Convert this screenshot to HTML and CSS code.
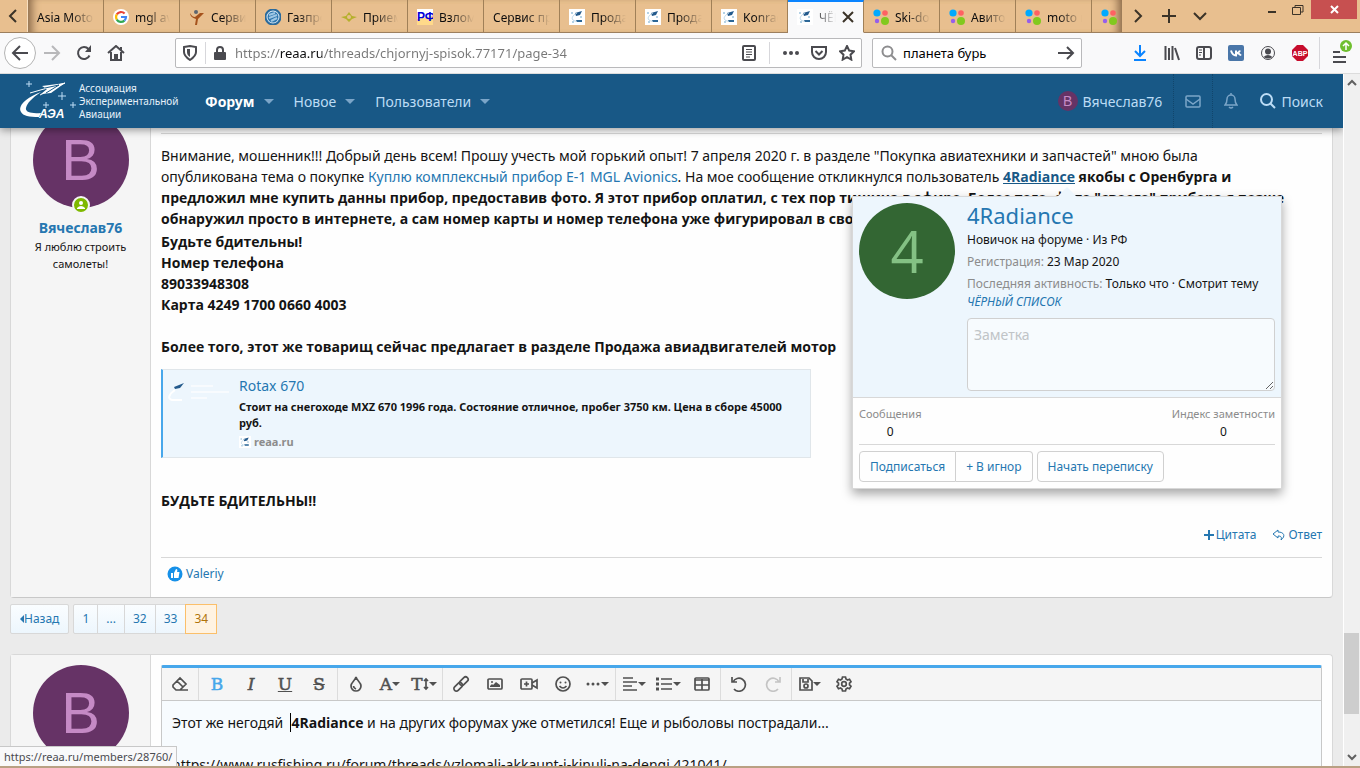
FILE: index.html
```html
<!DOCTYPE html>
<html lang="ru">

<head>
    <meta charset="UTF-8">
    <meta name="viewport" content="width=device-width, initial-scale=1.0">
    <title>ЧЁРНЫЙ СПИСОК</title>
    <link rel="stylesheet" href="styles.css">
</head>

<body>
    <!-- общие значки -->
    <svg class="defs" width="0" height="0">
        <symbol id="fav-reaa" viewBox="0 0 16 16">
            <rect width="16" height="16" fill="#fff" />
            <path d="M6 4l7-2-2 4-4 1z" fill="#235a8c" />
            <path d="M8 4C4 6 2 9 4 11s6 1 9 1" fill="none" stroke="#b9d5e8" />
            <path d="M7 11h6v2H8z" fill="#2c6797" />
            <path d="M3 3v2M2 4h2M12 7v2M11 8h2M4 12v2M3 13h2" stroke="#9cc3dd" />
        </symbol>
        <symbol id="fav-avito" viewBox="0 0 16 16">
            <circle cx="4" cy="4" r="3.6" fill="#0af" />
            <circle cx="12" cy="4" r="2.8" fill="#ff6163" />
            <circle cx="4" cy="12" r="2.2" fill="#965eeb" />
            <circle cx="12" cy="12" r="4" fill="#82c91e" />
        </symbol>
        <symbol id="caret" viewBox="0 0 8 4">
            <path d="M0 0h8L4 4z" fill="currentColor" />
        </symbol>
    </svg>

    <div class="tabbar">
        <button class="tab-scroll" aria-label="Назад"><svg width="16" height="16"><path d="M10 2L4 8l6 6" /></svg></button>
        <div class="tabs">
            <div class="tab"><span>Asia Motors</span></div>
            <div class="tab">
                <svg class="fav" viewBox="0 0 16 16">
                    <circle cx="8" cy="8" r="8" fill="#fff" />
                    <g fill="none" stroke-width="2.2">
                        <path d="M3.8 5.4A5 5 0 0 1 11.6 4.5" stroke="#ea4335" />
                        <path d="M3.8 5.4a5 5 0 0 0 0 5.2" stroke="#fbbc05" />
                        <path d="M3.8 10.6a5 5 0 0 0 7.6 1" stroke="#34a853" />
                        <path d="M8 8h5a5 5 0 0 1-1.6 3.6" stroke="#4285f4" />
                    </g>
                </svg>
                <span>mgl avionics</span>
            </div>
            <div class="tab">
                <svg class="fav" viewBox="0 0 16 16">
                    <circle cx="7" cy="3" r="2" fill="#5d6670" />
                    <path d="M1 4c2 3 3 4 5 4l5-4 4 0-6 6-1 6H6l1-6C3 9 1 7 1 4z" fill="#a5521c" />
                </svg>
                <span>Сервис</span>
            </div>
            <div class="tab">
                <svg class="fav" viewBox="0 0 16 16">
                    <circle cx="8" cy="8" r="7.5" fill="#d9e8f3" stroke="#2a6a9c" />
                    <circle cx="8" cy="8" r="5.5" fill="#2d76ae" />
                    <path d="M4 6l6-2M4 9l8-3M6 12l6-3" stroke="#9fc7e4" />
                </svg>
                <span>Газпром</span>
            </div>
            <div class="tab">
                <svg class="fav" viewBox="0 0 16 16">
                    <path d="M0 8l5-1 3-4 3 4 5 1-5 2-3 3-3-3z" fill="#b5b02c" />
                    <circle cx="8" cy="8" r="2" fill="#e8bf8f" />
                </svg>
                <span>Приемка</span>
            </div>
            <div class="tab">
                <svg class="fav" viewBox="0 0 16 16">
                    <rect width="16" height="16" fill="#fff" />
                    <path d="M0 16V10l16-3v9z" fill="#ffd98a" />
                    <text x="0" y="12" class="fav-text">РФ</text>
                </svg>
                <span>Взломали</span>
            </div>
            <div class="tab"><span>Сервис про</span></div>
            <div class="tab"><svg class="fav"><use href="#fav-reaa" /></svg><span>Продажа</span></div>
            <div class="tab"><svg class="fav"><use href="#fav-reaa" /></svg><span>Продажа</span></div>
            <div class="tab"><svg class="fav"><use href="#fav-reaa" /></svg><span>Konrad</span></div>
            <div class="tab tab-active">
                <svg class="fav"><use href="#fav-reaa" /></svg><span>ЧЁРНЫЙ</span>
                <button class="tab-close" aria-label="Закрыть вкладку"><svg width="12" height="12"><path d="M1 1l10 10M11 1L1 11" /></svg></button>
            </div>
            <div class="tab"><svg class="fav"><use href="#fav-avito" /></svg><span>Ski-doo</span></div>
            <div class="tab"><svg class="fav"><use href="#fav-avito" /></svg><span>Авито —</span></div>
            <div class="tab"><svg class="fav"><use href="#fav-avito" /></svg><span>moto m</span></div>
            <div class="tab"><svg class="fav"><use href="#fav-avito" /></svg><span>moto</span></div>
        </div>
        <div class="tab-tools">
            <button aria-label="Вперёд"><svg width="16" height="16"><path d="M5 2l6 6-6 6" /></svg></button>
            <button aria-label="Новая вкладка"><svg width="16" height="16"><path d="M8 1v14M1 8h14" /></svg></button>
            <button aria-label="Список вкладок"><svg width="16" height="16"><path d="M2 5l6 6 6-6" /></svg></button>
        </div>
        <div class="window-buttons">
            <button aria-label="Свернуть"><svg width="10" height="10"><path d="M1 7h8" stroke-width="2" /></svg></button>
            <button aria-label="Развернуть"><svg width="12" height="10"><path d="M3 2V.5h8V7H9M.5 2.5h8v7h-8z" /></svg></button>
            <button class="window-close" aria-label="Закрыть"><svg width="9" height="9"><path d="M1 1l7 7M8 1L1 8" stroke-width="2" /></svg></button>
        </div>
    </div>

    <div class="toolbar">
        <button class="back" aria-label="Назад"><svg width="18" height="16"><path d="M9 1L2 8l7 7M2 8h15" /></svg></button>
        <button class="disabled" aria-label="Вперёд"><svg width="18" height="16"><path d="M9 1l7 7-7 7M16 8H1" /></svg></button>
        <button aria-label="Обновить"><svg width="16" height="16"><path d="M13.5 10.5A6 6 0 1 1 12.500 4" /><path d="M15 0v7H9z" class="solid" /></svg></button>
        <button aria-label="Домой"><svg width="18" height="16"><path d="M1 8l8-7 8 7M4 7v8h10V7M14 5V2" /><path d="M7 9h4v6H7z" class="solid" /></svg></button>
        <div class="urlbar">
            <svg width="14" height="16"><path d="M1 2l6-1 6 1v5c0 4-3 6-6 8-3-2-6-4-6-8z" /><path d="M7 4v8C5 11 4 9 4 7V4z" class="solid" /></svg>
            <i class="url-sep"></i>
            <svg width="12" height="16"><path d="M3 7V5a3 3 0 0 1 6 0v2" /><rect y="7" width="12" height="8" rx="1" class="solid" /></svg>
            <input class="url" type="text" aria-label="Адрес" value="https://reaa.ru/threads/chjornyj-spisok.77171/page-34">
            <svg width="14" height="16"><rect x="1" y="1" width="12" height="14" rx="1" /><path d="M4 4.500h6M4 7h6M4 9.500h6M4 12h4" stroke-width="1" /></svg>
            <i class="url-sep url-sep-right"></i>
            <svg width="17" height="16"><g class="solid"><circle cx="3" cy="8" r="2" /><circle cx="9" cy="8" r="2" /><circle cx="15" cy="8" r="2" /></g></svg>
            <svg width="16" height="16"><path d="M1 2h14v5a7 7 0 0 1-14 0z" /><path d="M4.500 6L8 9.500 11.500 6" /></svg>
            <svg width="16" height="16"><path d="M8 1l2.200 4.600 4.800.7-3.500 3.400.8 4.900L8 12.200l-4.300 2.400.8-4.900L1 6.300l4.800-.7z" /></svg>
        </div>
        <div class="searchbar">
            <svg class="grey" width="16" height="16"><circle cx="6.500" cy="6.500" r="5" /><path d="M10 10l5 5" /></svg>
            <input type="text" aria-label="Поиск" value="планета бурь">
            <svg width="17" height="14"><path d="M9 1l6 6-6 6M0 7h15" /></svg>
        </div>
        <div class="extensions">
            <button class="download" aria-label="Загрузки"><svg width="14" height="16"><path d="M7 0v11M2 6l5 5 5-5M1 15h12" /></svg></button>
            <button aria-label="Библиотека"><svg width="16" height="16"><path d="M1.500 1v14M5 3v12M8.500 1v14M11 3l4 12" /></svg></button>
            <button aria-label="Боковая панель"><svg width="16" height="16"><rect x="1" y="2" width="14" height="12" rx="2" /><path d="M8 2v12" /><path d="M3 5h3M3 7.500h3M3 10h2" stroke-width="1" /></svg></button>
            <button aria-label="ВК"><svg width="16" height="16"><rect width="16" height="16" rx="2" fill="#4a76a8" stroke="none" /><path d="M3 5.500q1.500 5 5 5v-5M8 8q3 0 4-2.500M8 8q3 0 5 2.500" stroke="#fff" /></svg></button>
            <button aria-label="Профиль"><svg width="16" height="16"><circle cx="8" cy="8" r="6.500" stroke-width="1" /><circle cx="8" cy="6.500" r="3" class="solid" /><path d="M3.500 12q4.500-4 9 0-4.500 3-9 0z" class="solid" /></svg></button>
            <button aria-label="Adblock Plus"><svg width="16" height="16"><path d="M5 0h6l5 5v6l-5 5H5l-5-5V5z" fill="#c70d2c" stroke="none" /><text x="8" y="11" class="abp">ABP</text></svg></button>
        </div>
        <button class="menu" aria-label="Меню">
            <svg width="24" height="28"><path d="M3 13h7M3 18h13M3 23h13" /><circle cx="16" cy="7" r="6" fill="#6fbf2f" stroke="none" /><path d="M16 11V4M13 7l3-3 3 3" stroke="#fff" stroke-width="1.500" /></svg>
        </button>
    </div>

    <div class="viewport">
        <div class="page">
            <header class="site-nav">
                <a class="logo" href="#" aria-label="Ассоциация Экспериментальной Авиации">
                    <svg width="56" height="40" viewBox="0 0 56 40">
                        <path d="M22 5l23-3-14 10-10 1 6-5z" fill="#fff" />
                        <path d="M10 12L45 2 20 14" fill="none" stroke="#fff" stroke-width="1" />
                        <path d="M25 7l14-3-13 8" fill="none" stroke="#185886" stroke-width="1" />
                        <path d="M21 11C7 16-3 25 1 31c2 4 8 5 18 5l2-4C11 33 5 31 6 27c1-5 6-10 15-16z" fill="#fff" />
                        <path d="M9 0v6M6 3h6M42 11v8M38 15h8M26 21v6M23 24h6M53 21v6M50 24h6" stroke="#bcdcf5" stroke-width="1" />
                        <text x="19" y="37" class="logo-mark">АЭА</text>
                    </svg>
                    <span>Ассоциация<br>Экспериментальной<br>Авиации</span>
                </a>
                <nav>
                    <a class="nav-active" href="#">Форум</a><svg class="nav-caret"><use href="#caret" /></svg>
                    <a href="#">Новое</a><svg class="nav-caret"><use href="#caret" /></svg>
                    <a href="#">Пользователи</a><svg class="nav-caret"><use href="#caret" /></svg>
                </nav>
                <div class="account">
                    <a href="#"><b class="avatar avatar-xs">В</b>Вячеслав76</a>
                    <a class="dotted" href="#" aria-label="Переписка"><svg class="dim" width="16" height="16"><rect x="1" y="3" width="14" height="11" rx="1" /><path d="M1 6l7 5 7-5" /></svg></a>
                    <a href="#" aria-label="Оповещения"><svg class="dim" width="14" height="16"><path d="M1 12h12c-2-2-2-3-2-6a4 4 0 0 0-8 0c0 3 0 4-2 6zM5 14q2 2 4 0M7 0v2" /></svg></a>
                    <a href="#"><svg width="16" height="16"><circle cx="6.500" cy="6.500" r="5.500" /><path d="M10.500 10.500L15 15" /></svg>Поиск</a>
                </div>
            </header>

            <main>
                <article class="card">
                    <aside class="user">
                        <a class="avatar" href="#">В
                            <svg class="online" width="18" height="18"><circle cx="9" cy="9" r="8" fill="#7fb900" stroke="#f5f5f5" stroke-width="2" /><circle cx="9" cy="7" r="2" fill="#fff" /><path d="M5 12q4-4 8 0v1H5z" fill="#fff" /></svg>
                        </a>
                        <a class="user-name" href="#">Вячеслав76</a>
                        <p>Я люблю строить самолеты!</p>
                    </aside>
                    <div class="post">
                        <div class="post-head">Среда в 21:40</div>
                        <p class="intro">Внимание, мошенник!!! Добрый день всем! Прошу учесть мой горький опыт! 7 апреля 2020 г. в разделе "Покупка авиатехники и запчастей" мною была<br>
                            опубликована тема о покупке <a href="#">Куплю комплексный прибор E-1 MGL Avionics</a>. На мое сообщение откликнулся пользователь <b><a class="mention" href="#">4Radiance</a> якобы с Оренбурга и<br>
                            предложил мне купить данны прибор, предоставив фото. Я этот прибор оплатил, с тех пор тишина в эфире. Более того, фото "своего" прибора я позже<br>
                            обнаружил просто в интернете, а сам номер карты и номер телефона уже фигурировал в сводках мошенников на других форумах по интернету.</b></p>
                        <p class="details">Будьте бдительны!<br>Номер телефона<br>89033948308<br>Карта 4249 1700 0660 4003<br><br>Более того, этот же товарищ сейчас предлагает в разделе Продажа авиадвигателей мотор</p>
                        <div class="unfurl">
                            <svg width="64" height="24" viewBox="0 0 64 24">
                                <path d="M7 6l10-4-4 5-5 1z" fill="#235a8c" />
                                <path d="M8 9C2 13 0 18 5 19h10" fill="none" stroke="#fff" stroke-width="2" />
                                <path d="M24 5h22M24 11h38M24 17h16" stroke="#fff" stroke-opacity=".6" />
                            </svg>
                            <div>
                                <a class="unfurl-title" href="#">Rotax 670</a>
                                <p>Стоит на снегоходе MXZ 670 1996 года. Состояние отличное, пробег 3750 км. Цена в сборе 45000 руб.</p>
                                <small><svg width="12" height="12"><use href="#fav-reaa" /></svg>reaa.ru</small>
                            </div>
                        </div>
                        <p class="warning">БУДЬТЕ БДИТЕЛЬНЫ!!</p>
                        <div class="actions">
                            <a href="#"><svg width="10" height="10"><path d="M5 0v10M0 5h10" stroke-width="2" /></svg>Цитата</a>
                            <a href="#"><svg width="14" height="12"><path d="M6 1L1 5l5 4V7c3 0 4 1 3 4 5-4 3-8-3-8z" /></svg>Ответ</a>
                        </div>
                        <div class="reactions">
                            <svg width="16" height="16"><circle cx="8" cy="8" r="7.500" fill="#1690e8" /><path d="M4 7h2v5H4zM7 7l2-4q2 0 1 3h2.500L11.500 12H7z" fill="#fff" /></svg>
                            <a href="#">Valeriy</a>
                        </div>
                    </div>
                </article>

                <nav class="pager">
                    <a class="pager-prev" href="#"><svg width="4" height="8"><path d="M4 0v8L0 4z" /></svg>Назад</a>
                    <div class="pages">
                        <a href="#">1</a><a href="#">...</a><a href="#">32</a><a href="#">33</a><a class="current" href="#">34</a>
                    </div>
                </nav>

                <section class="card">
                    <aside class="user"><a class="avatar" href="#">В</a></aside>
                    <div class="post">
                        <div class="editor">
                            <div class="editor-tools">
                                <div class="group">
                                    <button aria-label="Очистить"><svg width="18" height="16"><path d="M2 9l7-7 6 6-6 6H5L2 11zM6 5l6 6M8 14h9" /></svg></button>
                                </div>
                                <div class="group">
                                    <button class="glyph on">B</button>
                                    <button class="glyph"><i>I</i></button>
                                    <button class="glyph"><u>U</u></button>
                                    <button class="glyph"><s>S</s></button>
                                </div>
                                <div class="group">
                                    <button aria-label="Цвет"><svg width="12" height="16"><path d="M6 1c1 4 5 5 5 9a5 5 0 0 1-10 0c0-4 4-5 5-9zM3.500 10q0 2 2.500 3" /></svg></button>
                                    <button class="glyph">A<svg class="caret"><use href="#caret" /></svg></button>
                                    <button class="glyph">T<svg width="6" height="14"><path d="M3 2v10M1 4l2-2 2 2M1 10l2 2 2-2" /></svg><svg class="caret"><use href="#caret" /></svg></button>
                                </div>
                                <div class="group">
                                    <button aria-label="Ссылка"><svg width="18" height="18"><rect x="0" y="6.500" width="10" height="5" rx="2.500" transform="rotate(-45 9 9)" /><rect x="8" y="6.500" width="10" height="5" rx="2.500" transform="rotate(-45 9 9)" /></svg></button>
                                    <button aria-label="Картинка"><svg width="16" height="14"><rect x="1" y="2" width="14" height="10" rx="1" /><path d="M3 10V9l2-2 1 1 3-3 4 3v2z" class="solid" /><circle cx="5" cy="5" r="1" class="solid" /></svg></button>
                                    <button aria-label="Медиа"><svg width="18" height="14"><rect x="1" y="2" width="11" height="10" rx="1" /><path d="M12 6l5-3v8l-5-3M6.500 4.500v5M4 7h5" /></svg></button>
                                    <button aria-label="Смайлы"><svg width="16" height="16"><circle cx="8" cy="8" r="7" /><circle cx="5.500" cy="6.500" r="1" class="solid" /><circle cx="10.500" cy="6.500" r="1" class="solid" /><path d="M4.500 10q3.500 4 7 0" /></svg></button>
                                    <button aria-label="Вставить"><svg width="15" height="4"><g class="solid"><circle cx="2" cy="2" r="1.500" /><circle cx="7" cy="2" r="1.500" /><circle cx="12" cy="2" r="1.500" /></g></svg><svg class="caret"><use href="#caret" /></svg></button>
                                </div>
                                <div class="group">
                                    <button aria-label="Выравнивание"><svg width="15" height="16"><path d="M0 2h10M0 6h14M0 10h9M0 14h14" /></svg><svg class="caret"><use href="#caret" /></svg></button>
                                    <button aria-label="Список"><svg width="17" height="16"><path d="M0 3h3M0 8h3M0 13h3" stroke-width="3" /><path d="M5 3h11M5 8h11M5 13h11" /></svg><svg class="caret"><use href="#caret" /></svg></button>
                                    <button aria-label="Таблица"><svg width="16" height="14"><rect x="1" y="1" width="14" height="12" rx="1" /><path d="M1 3h14M1 8h14M8 2v11" /></svg></button>
                                </div>
                                <div class="group">
                                    <button aria-label="Отменить"><svg width="16" height="16"><path d="M1 1v5h5M2 6a6.500 6.500 0 1 1 1 7" /></svg></button>
                                    <button class="off" aria-label="Повторить"><svg width="16" height="16"><path d="M15 1v5h-5M14 6a6.500 6.500 0 1 0-1 7" /></svg></button>
                                </div>
                                <div class="group">
                                    <button aria-label="Черновики"><svg width="14" height="14"><path d="M1 1h9l3 3v9H1zM4 2v3h5V2" /><circle cx="7" cy="9" r="2" /></svg><svg class="caret"><use href="#caret" /></svg></button>
                                    <button aria-label="Настройки"><svg width="16" height="16"><path d="M6.500 1h3l.5 2 1.500 1 2-.8 1.500 2.600L13.500 7.200v1.600l1.500 1.400-1.500 2.600-2-.8-1.500 1-.5 2h-3l-.5-2-1.500-1-2 .8L1 10.200l1.500-1.400V7.200L1 5.800l1.500-2.600 2 .8L6 3z" /><circle cx="8" cy="8" r="2.300" /></svg></button>
                                </div>
                            </div>
                            <div class="editor-body" contenteditable="true" role="textbox" aria-label="Ответ">
                                <p>Этот же негодяй&nbsp; <b class="cursor">4Radiance</b> и на других форумах уже отметился! Еще и рыболовы пострадали...</p>
                                <p>https://www.rusfishing.ru/forum/threads/vzlomali-akkaunt-i-kinuli-na-dengi.421041/</p>
                            </div>
                        </div>
                    </div>
                </section>
            </main>

            <!-- карточка пользователя -->
            <div class="member-tip">
                <div class="tip-head">
                    <a class="avatar avatar-green" href="#">4</a>
                    <div class="tip-info">
                        <a class="tip-name" href="#">4Radiance</a>
                        <p>Новичок на форуме · Из РФ</p>
                        <p><span>Регистрация:</span> 23 Мар 2020</p>
                        <p class="tip-activity"><span>Последняя активность:</span> Только что · Смотрит тему <a href="#">ЧЁРНЫЙ СПИСОК</a></p>
                        <textarea placeholder="Заметка" aria-label="Заметка"></textarea>
                    </div>
                </div>
                <div class="tip-body">
                    <div class="tip-stats">
                        <dl><dt>Сообщения</dt><dd>0</dd></dl>
                        <dl><dt>Индекс заметности</dt><dd>0</dd></dl>
                    </div>
                    <div class="tip-buttons">
                        <div class="button-pair"><button>Подписаться</button><button>+ В игнор</button></div>
                        <button>Начать переписку</button>
                    </div>
                </div>
            </div>

            <div class="status">https://reaa.ru/members/28760/</div>
        </div>
        <div class="scrollbar">
            <svg width="10" height="18"><path d="M1 11l4-4 4 4" /></svg>
            <div class="track"><div class="thumb"></div></div>
            <svg width="10" height="18"><path d="M1 7l4 4 4-4" /></svg>
        </div>
    </div>
</body>

</html>
```
FILE: styles.css
```css
* {
    margin: 0;
    padding: 0;
    box-sizing: border-box;
}

body {
    display: flex;
    flex-direction: column;
    height: 100vh;
    overflow: hidden;
    border-bottom: 2px solid #b9a083;
    font-family: "Noto Sans", "Open Sans", sans-serif;
    font-size: 14px;
    line-height: 21px;
    color: #141414;
    background: #ebebeb;
}

a {
    color: #2577b1;
    text-decoration: none;
}

button {
    font: inherit;
    color: inherit;
    border: none;
    background: none;
}

input,
textarea {
    font: inherit;
    border: none;
    outline: none;
    background: none;
}

svg {
    flex: none;
    fill: none;
    stroke: currentColor;
    stroke-width: 2;
}

svg .solid {
    fill: currentColor;
    stroke: none;
}

svg text,
svg use,
symbol {
    stroke-width: 1;
}

.defs {
    position: absolute;
}

/* вкладки */
.tabbar {
    display: flex;
    flex: none;
    height: 33px;
    background: #e8bf8f;
    border-bottom: 1px solid #9c7f5e;
    font-size: 12px;
    color: #0c0c0d;
}

.tabbar button {
    display: flex;
    align-items: center;
    justify-content: center;
    color: #3b3328;
}

.tab-scroll {
    width: 28px;
    border-right: 1px solid #f8dfc0 !important;
}

.tabs {
    display: flex;
    flex: 1;
    overflow: hidden;
    margin-bottom: -1px;
    box-shadow: inset 10px 0 8px -6px #8a6a4a, inset -10px 0 8px -6px #8a6a4a;
}

.tab {
    display: flex;
    flex: none;
    align-items: center;
    gap: 6px;
    width: 76px;
    padding: 2px 9px 0;
    border-right: 1px solid #a08058;
    border-bottom: 1px solid #9c7f5e;
}

.tab span {
    flex: 1;
    overflow: hidden;
    white-space: nowrap;
    -webkit-mask-image: linear-gradient(to left, transparent, #000 24px);
    mask-image: linear-gradient(to left, transparent, #000 24px);
}

.tab-active {
    padding-top: 0;
    background: #f9f9fa;
    border-top: 2px solid #0a84ff;
    border-bottom-color: #f9f9fa;
}

.fav {
    width: 16px;
    height: 16px;
    stroke: none;
}

.fav-text {
    font: bold 12px "Liberation Sans", sans-serif;
    fill: #0000d8;
}

.tab-tools {
    display: flex;
    flex: none;
    width: 137px;
}

.tabbar .tab-tools button {
    width: 31px;
}

.window-buttons {
    display: flex;
    flex: none;
    align-items: flex-start;
    width: 101px;
    padding-right: 3px;
}

.window-buttons button {
    width: 26px;
    height: 19px;
}

.window-buttons svg {
    stroke-width: 1;
}

.tabbar .window-close {
    flex: 1;
    color: #fff;
    background: #c75050;
}

/* панель браузера */
.toolbar {
    display: flex;
    flex: none;
    align-items: center;
    height: 41px;
    padding: 0 6px 0 4px;
    color: #4a4a4f;
    background: #f9f9fa;
    border-bottom: 1px solid #dcdcdc;
}

.toolbar button {
    display: flex;
    align-items: center;
    justify-content: center;
    width: 32px;
    height: 32px;
}

.toolbar .back {
    background: #fff;
    border: 1px solid #b4b4b4;
    border-radius: 50%;
}

.toolbar .disabled {
    color: #b8b8ba;
}

.urlbar,
.searchbar {
    display: flex;
    align-items: center;
    height: 30px;
    font-size: 13px;
    background: #fff;
    border: 1px solid #b9b9bb;
    border-radius: 2px;
}

.urlbar {
    flex: 1;
    gap: 12px;
    margin-left: 43px;
    padding: 0 6px 0 7px;
}

.url-sep {
    width: 1px;
    height: 22px;
    margin: 0 -4px;
    background: #d7d7db;
}

.url-sep-right {
    margin: 0 0 0 1px;
}

.urlbar .url {
    flex: 1;
    margin-left: -3px;
    color: transparent;
    background: linear-gradient(to right, #777 45px, #0c0c0d 45px, #0c0c0d 87px, #777 87px);
    -webkit-background-clip: text;
    background-clip: text;
}

.searchbar {
    flex: none;
    gap: 6px;
    width: 210px;
    margin-left: 10px;
    padding: 0 6px 0 8px;
}

.searchbar input {
    flex: 1;
    min-width: 0;
}

.grey {
    color: #8d8d8f;
}

.extensions {
    display: flex;
    margin-left: 42px;
    padding-right: 3px;
    border-right: 1px solid #d7d7db;
}

.download {
    color: #0a84ff !important;
}

.abp {
    font: bold 7px "Liberation Sans", sans-serif;
    fill: #fff;
    stroke: none;
    text-anchor: middle;
}

.toolbar .menu {
    width: 24px;
    margin-left: 10px;
}

.viewport {
    display: flex;
    flex: 1;
    min-height: 0;
}

.page {
    position: relative;
    flex: 1;
    overflow: hidden;
}

.scrollbar {
    display: flex;
    flex-direction: column;
    align-items: center;
    width: 17px;
    color: #606060;
    background: #f0f0f0;
    border-left: 1px solid #fff;
}

.track {
    display: flex;
    flex: 1;
    flex-direction: column;
    justify-content: flex-end;
    align-self: stretch;
    padding: 0 1px 34px 0;
}

.thumb {
    height: 13%;
    background: #cdcdcd;
}

/* шапка сайта закреплена поверх сообщений */
.site-nav {
    position: absolute;
    z-index: 2;
    top: 0;
    left: 0;
    right: 0;
    display: flex;
    align-items: center;
    height: 54px;
    padding: 0 20px;
    color: #bcdcf5;
    background: #185886;
    box-shadow: 0 2px 8px rgba(0, 0, 0, .4);
}

.site-nav a {
    display: flex;
    align-items: center;
    color: inherit;
}

.site-nav .logo {
    gap: 3px;
    width: 185px;
    font-size: 10px;
    line-height: 13px;
    color: #e6f1fa;
}

.logo svg {
    stroke: none;
}

.logo-mark {
    font: italic bold 12px "Liberation Sans", sans-serif;
    fill: #fff;
}

.site-nav nav {
    display: flex;
    align-items: center;
}

.site-nav .nav-active {
    font-weight: bold;
    color: #fff;
}

.nav-caret {
    width: 10px;
    height: 5px;
    margin: 0 20px 0 9px;
    color: #7ba5c8;
    stroke: none;
}

.account {
    display: flex;
    align-self: stretch;
    margin-left: auto;
}

.account a {
    padding: 0 11px;
    gap: 5px;
}

.account a:last-child {
    padding-right: 0;
}

.account .dotted {
    border: 1px dotted #11456b;
    border-width: 0 1px;
}

.dim {
    color: #7ba5c8;
    stroke-width: 1.5;
}

main {
    padding: 27px 10px 0;
}

.card {
    display: flex;
    background: #fefefe;
    border: 1px solid #d8d8d8;
    border-bottom-color: #c8c8c8;
    border-radius: 4px;
}

.user {
    flex: none;
    width: 140px;
    padding: 10px;
    font-size: 11px;
    line-height: 17px;
    text-align: center;
    background: #f5f5f5;
    border-right: 1px solid #d8d8d8;
}

.avatar {
    position: relative;
    display: block;
    flex: none;
    width: 96px;
    height: 96px;
    margin: 0 auto;
    font: 58px/96px "Liberation Sans", sans-serif;
    text-align: center;
    color: #c58ac5;
    background: #663366;
    border-radius: 50%;
}

.site-nav .avatar-xs {
    width: 20px;
    height: 20px;
    font-size: 14px;
    line-height: 20px;
}

.avatar-green {
    font-family: "Open Sans", sans-serif;
    color: #84c184;
    background: #336633;
}

.online {
    position: absolute;
    bottom: -6px;
    left: 39px;
    stroke: none;
}

.user-name {
    display: block;
    margin: 11px 0 1px;
    font-size: 14px;
    font-weight: bold;
    line-height: 18px;
}

.post {
    flex: 1;
    min-width: 0;
    padding: 10px;
}

.post b,
.details,
.warning {
    font-family: "Open Sans", sans-serif;
    font-weight: bold;
}

.post-head {
    height: 22px;
    font-size: 12px;
    line-height: 16px;
    color: #8c8c8c;
    border-bottom: 1px solid #d8d8d8;
}

.intro {
    margin-top: 11px;
    white-space: nowrap;
}

.intro .mention {
    color: #185886;
    text-decoration: underline;
}

.details {
    margin-top: 2px;
}

.unfurl {
    display: flex;
    gap: 8px;
    width: 650px;
    margin-top: 12px;
    padding: 5px 4px 7px;
    background: #edf6fd;
    border: 1px solid #e0e6ea;
    border-left: 2px solid #47a7eb;
}

.unfurl svg {
    margin-top: 6px;
    stroke: none;
}

.unfurl-title {
    line-height: 20px;
}

.unfurl p {
    margin: 3px 0;
    font-size: 11px;
    font-weight: bold;
    line-height: 16px;
}

.unfurl small {
    display: flex;
    align-items: center;
    gap: 3px;
    font-size: 11px;
    font-weight: bold;
    line-height: 16px;
    color: #8c8c8c;
}

.unfurl small svg {
    margin: 0;
}

.warning {
    margin-top: 32px;
}

.actions {
    display: flex;
    justify-content: flex-end;
    gap: 16px;
    margin-top: 13px;
    padding-bottom: 12px;
    font-size: 12px;
    border-bottom: 1px solid #d8d8d8;
}

.actions a {
    display: flex;
    align-items: center;
    gap: 2px;
}

.actions svg {
    stroke-width: 1;
}

.reactions {
    display: flex;
    align-items: center;
    gap: 3px;
    padding: 5px 6px 3px;
    font-size: 12px;
}

.reactions svg {
    stroke: none;
}

.pager {
    display: flex;
    gap: 4px;
    margin: 6px 0 20px;
    font-size: 12px;
    line-height: 28px;
}

.pager-prev,
.pages {
    display: flex;
    align-items: center;
    background: linear-gradient(#fafdff, #edf6fd);
    border: 1px solid #d8d8d8;
    border-radius: 2px;
}

.pager-prev {
    padding: 0 9px;
}

.pager-prev svg {
    fill: currentColor;
    stroke: none;
}

.pages a {
    padding: 0 8px;
    border-right: 1px solid #d8d8d8;
}

.pages .current {
    margin: -1px;
    color: #b0730a;
    background: #fff3e2;
    border: 1px solid #fbbf6a;
}

/* редактор */
.editor {
    border: 1px solid #c8c8c8;
    border-top: 3px solid #47a7eb;
    border-radius: 2px;
    background: #f7fbfe;
}

.editor-tools {
    display: flex;
    height: 33px;
    color: #505050;
    background: #f5f5f5;
    border-bottom: 1px solid #c8c8c8;
}

.group {
    display: flex;
    padding: 0 1px;
    border-right: 1px solid #dcdcdc;
}

.group:last-child {
    border: none;
}

.group button {
    display: flex;
    align-items: center;
    justify-content: center;
    width: 34px;
}

.group svg {
    stroke-width: 1.7;
}

.group .glyph {
    font-family: "DejaVu Serif", serif;
    font-size: 17px;
    -webkit-text-stroke: .5px currentColor;
}

.group .on {
    color: #47a7eb;
}

.group .off {
    color: #c4c4c4;
}

.group .caret {
    width: 8px;
    height: 4px;
    stroke: none;
}

.editor-body {
    padding: 11px 10px;
}

.editor-body p {
    margin-bottom: 21px;
}

.cursor {
    border-left: 1px solid #000;
}

/* всплывающая карточка */
.member-tip {
    position: absolute;
    top: 122px;
    right: 61px;
    width: 430px;
    font-size: 12px;
    line-height: 18px;
    background: #fefefe;
    border: 1px solid #d8d8d8;
    box-shadow: 0 5px 10px rgba(0, 0, 0, .35);
}

.member-tip::before {
    content: "";
    position: absolute;
    top: -10px;
    left: 204px;
    border: 10px solid transparent;
    border-top: none;
    border-bottom-color: #edf6fd;
}

.tip-head {
    display: flex;
    gap: 12px;
    padding: 6px;
    background: #edf6fd;
    border-bottom: 1px solid #d8d8d8;
}

.tip-head .avatar {
    margin: 0;
}

.tip-info {
    flex: 1;
    min-width: 0;
}

.tip-name {
    display: block;
    font-size: 22px;
    line-height: 24px;
}

.tip-info p {
    margin-top: 4px;
}

.tip-info span,
.tip-stats dt {
    color: #8c8c8c;
}

.tip-stats dt {
    font-size: 11px;
}

.tip-info p a {
    font-style: italic;
}

.tip-info textarea {
    display: block;
    width: 100%;
    height: 73px;
    margin-top: 7px;
    padding: 7px 6px;
    font-size: 14px;
    background: #f7fbfe;
    border: 1px solid #d0d0d0;
    border-radius: 4px;
}

.tip-info textarea::placeholder {
    color: #c0c4c7;
}

.tip-body {
    padding: 7px 6px 6px;
}

.tip-stats {
    display: flex;
    justify-content: space-between;
    padding-bottom: 3px;
    text-align: center;
    border-bottom: 1px solid #d8d8d8;
}

.tip-buttons {
    display: flex;
    gap: 4px;
    padding-top: 6px;
    color: #2577b1;
}

.tip-buttons button {
    height: 31px;
    padding: 0 10px;
    border: 1px solid #d0d0d0;
    border-radius: 4px;
}

.button-pair {
    display: flex;
}

.tip-buttons .button-pair button:first-child {
    border-radius: 4px 0 0 4px;
}

.tip-buttons .button-pair button:last-child {
    border-left: none;
    border-radius: 0 4px 4px 0;
}

/* строка состояния */
.status {
    position: absolute;
    bottom: 0;
    left: 0;
    padding: 0 4px;
    font-size: 11px;
    line-height: 19px;
    color: #4a4a4f;
    background: #f9f9fa;
    border: 1px solid #c8c8c8;
    border-width: 1px 1px 0 0;
}
```
